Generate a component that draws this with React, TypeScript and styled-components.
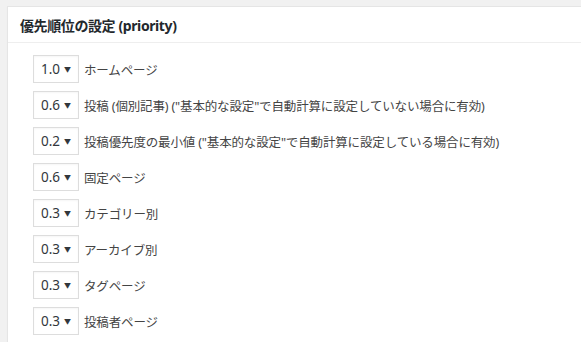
import styled, { createGlobalStyle } from "styled-components";

const GlobalStyle = createGlobalStyle`
  html, body {
    margin: 0;
    padding: 0;
    background: #f1f1f1;
  }
  body {
    font-family: "Noto Sans", "Noto Sans CJK JP", sans-serif;
    overflow: hidden;
  }
`;

const Page = styled.div`
  padding: 6px 0 0 7px;
  width: 581px;
  height: 342px;
  box-sizing: border-box;
  overflow: hidden;
`;

const Postbox = styled.div`
  background: #fff;
  border: 1px solid #e5e5e5;
  border-right: none;
  box-shadow: 0 1px 1px rgba(0, 0, 0, 0.04);
  min-height: 400px;
`;

const Title = styled.h2`
  margin: 0;
  padding: 0 12px;
  height: 35px;
  display: flex;
  align-items: center;
  font-size: 14px;
  font-weight: 700;
  letter-spacing: -0.4px;
  color: #23282d;
  border-bottom: 1px solid #eee;
`;

const List = styled.ul`
  list-style: none;
  margin: 0;
  padding: 12px 0 0 25px;
  display: flex;
  flex-direction: column;
  gap: 8px;
`;

const Row = styled.li`
  display: flex;
  align-items: center;
  gap: 5px;
`;

const Select = styled.div`
  width: 46px;
  height: 28px;
  box-sizing: border-box;
  border: 1px solid #ddd;
  box-shadow: inset 0 1px 2px rgba(0, 0, 0, 0.04);
  background: #fff;
  display: flex;
  align-items: center;
  justify-content: space-between;
  padding: 0 7px 0 7px;
  font-size: 13.5px;
  color: #32373c;
`;

const Arrow = styled.span`
  font-size: 7px;
  color: #32373c;
`;

const Label = styled.span`
  font-size: 12.5px;
  letter-spacing: -0.15px;
  color: #444;
  white-space: nowrap;
`;

const rows = [
  { value: "1.0", label: "ホームページ" },
  { value: "0.6", label: '投稿 (個別記事) ("基本的な設定"で自動計算に設定していない場合に有効)' },
  { value: "0.2", label: '投稿優先度の最小値 ("基本的な設定"で自動計算に設定している場合に有効)' },
  { value: "0.6", label: "固定ページ" },
  { value: "0.3", label: "カテゴリー別" },
  { value: "0.3", label: "アーカイブ別" },
  { value: "0.3", label: "タグページ" },
  { value: "0.3", label: "投稿者ページ" },
];

export default function App() {
  return (
    <>
      <GlobalStyle />
      <Page>
        <Postbox>
          <Title>優先順位の設定 (priority)</Title>
          <List>
            {rows.map((r, i) => (
              <Row key={i}>
                <Select>
                  {r.value}
                  <Arrow>▼</Arrow>
                </Select>
                <Label>{r.label}</Label>
              </Row>
            ))}
          </List>
        </Postbox>
      </Page>
    </>
  );
}
